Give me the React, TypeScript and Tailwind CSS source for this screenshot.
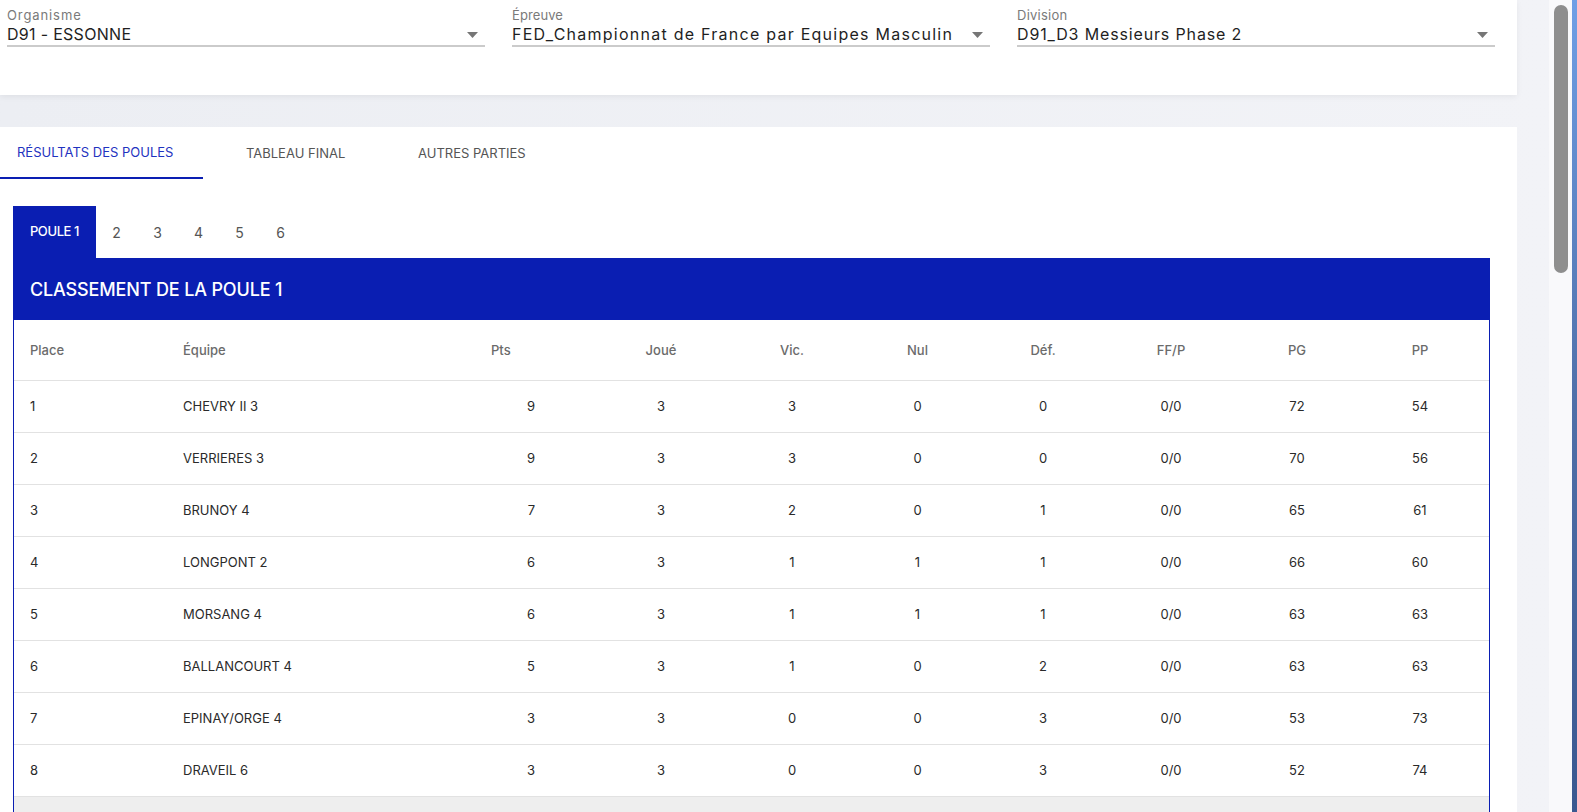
import React from "react";

const rows = [
  ["1", "CHEVRY II 3", "9", "3", "3", "0", "0", "0/0", "72", "54"],
  ["2", "VERRIERES 3", "9", "3", "3", "0", "0", "0/0", "70", "56"],
  ["3", "BRUNOY 4", "7", "3", "2", "0", "1", "0/0", "65", "61"],
  ["4", "LONGPONT 2", "6", "3", "1", "1", "1", "0/0", "66", "60"],
  ["5", "MORSANG 4", "6", "3", "1", "1", "1", "0/0", "63", "63"],
  ["6", "BALLANCOURT 4", "5", "3", "1", "0", "2", "0/0", "63", "63"],
  ["7", "EPINAY/ORGE 4", "3", "3", "0", "0", "3", "0/0", "53", "73"],
  ["8", "DRAVEIL 6", "3", "3", "0", "0", "3", "0/0", "52", "74"],
];

const grid =
  "grid grid-cols-[153px_308px_76px_43px_134px_128px_123px_128px_128px_124px_122px_1fr] items-center";

function Select({
  label,
  value,
  labelTrack,
  valueTrack,
}: {
  label: string;
  value: string;
  labelTrack: string;
  valueTrack: string;
}) {
  return (
    <div className="w-[478px] flex flex-col">
      <div className={`h-[16px] leading-[16px] text-[13px] text-[#7a7a7a] ${labelTrack}`}>{label}</div>
      <div className="h-[22px] flex items-center justify-between">
        <span className={`text-[16px] leading-[22px] text-[#1f1f1f] whitespace-nowrap ${valueTrack}`}>{value}</span>
        <svg width="11" height="6" viewBox="0 0 11 6" className="mr-[7px] mt-[2px]">
          <path d="M0 0 L11 0 L5.5 6 Z" fill="#767676" />
        </svg>
      </div>
      <div className="h-[2px] bg-[#cbcbcb]" />
    </div>
  );
}

export default function App() {
  return (
    <div
      className="w-[1577px] h-[812px] flex overflow-hidden bg-[#eef0f4]"
      style={{ fontFamily: "Inter, 'Open Sans', sans-serif" }}
    >
      <div className="w-[1549px] flex flex-col pr-[32px] bg-gradient-to-r from-[#eceef3] to-[#f2f3f7]">
        <div className="h-[95px] bg-white shadow-[0_2px_6px_rgba(0,0,0,0.06)] pt-[7px] pl-[7px] flex gap-[27px] shrink-0">
          <Select label="Organisme" value="D91 - ESSONNE" labelTrack="tracking-[0.9px]" valueTrack="tracking-[0.3px]" />
          <Select
            label="Épreuve"
            value="FED_Championnat de France par Equipes Masculin"
            labelTrack="tracking-[0.1px]"
            valueTrack="tracking-[1.25px]"
          />
          <Select
            label="Division"
            value="D91_D3 Messieurs Phase 2"
            labelTrack="tracking-[0.25px]"
            valueTrack="tracking-[0.85px]"
          />
        </div>

        <div className="mt-[32px] flex-1 bg-white flex flex-col">
          <div className="h-[52px] flex shrink-0 text-[13px]">
            <div className="w-[203px] h-full flex items-center pl-[17px] text-[#1f33c0] border-b-2 border-[#0a1eb2] pt-[2px]">
              RÉSULTATS DES POULES
            </div>
            <div className="w-[185px] h-full flex items-center pl-[43px] text-[#555] pt-[2px]">
              TABLEAU FINAL
            </div>
            <div className="w-[168px] h-full flex items-center pl-[30px] text-[#555] pt-[2px]">
              AUTRES PARTIES
            </div>
          </div>

          <div className="mt-[27px] ml-[13px] mr-[27px] flex flex-col flex-1">
            <div className="flex h-[52px] shrink-0">
              <div className="w-[83px] h-full bg-[#0a1eb2] text-white text-[13px] font-medium flex items-center justify-center tracking-[-0.4px]">
                POULE 1
              </div>
              {["2", "3", "4", "5", "6"].map((n) => (
                <div key={n} className="w-[41px] h-full flex items-center justify-center text-[14px] text-[#555]">
                  {n}
                </div>
              ))}
            </div>

            <div className="flex-1 border-x border-[#0a1eb2] flex flex-col">
              <div className="h-[62px] bg-[#0a1eb2] text-white text-[18px] font-medium flex items-center pl-[16px] shrink-0 tracking-[-0.15px]">
                CLASSEMENT DE LA POULE 1
              </div>
              <div className={`${grid} h-[61px] border-b border-[#e2e2e2] text-[13px] text-[#6b6b6b] font-medium shrink-0 pt-[1px]`}>
                <div className="pl-[16px]">Place</div>
                <div className="pl-[16px]">Équipe</div>
                <div className="pl-[16px]">Pts</div>
                <div />
                <div className="text-center">Joué</div>
                <div className="text-center">Vic.</div>
                <div className="text-center">Nul</div>
                <div className="text-center">Déf.</div>
                <div className="text-center">FF/P</div>
                <div className="text-center">PG</div>
                <div className="text-center">PP</div>
                <div />
              </div>
              {rows.map((r) => (
                <div key={r[0]} className={`${grid} h-[52px] border-b border-[#e2e2e2] text-[13px] text-[#2a2a2a] shrink-0`}>
                  <div className="pl-[16px]">{r[0]}</div>
                  <div className="pl-[16px]">{r[1]}</div>
                  <div className="text-right pr-[16px]">{r[2]}</div>
                  <div />
                  <div className="text-center">{r[3]}</div>
                  <div className="text-center">{r[4]}</div>
                  <div className="text-center">{r[5]}</div>
                  <div className="text-center">{r[6]}</div>
                  <div className="text-center">{r[7]}</div>
                  <div className="text-center">{r[8]}</div>
                  <div className="text-center">{r[9]}</div>
                  <div />
                </div>
              ))}
              <div className="flex-1 bg-[#eeeeee]" />
            </div>
          </div>
        </div>
      </div>

      <div className="w-[23px] h-full bg-[#f9f9fb] pt-[5px] pl-[5px]">
        <div className="w-[14px] h-[268px] rounded-full bg-[#8e8e8e]" />
      </div>
      <div className="w-[5px] h-full bg-gradient-to-b from-[#6f9fe6] via-[#4f6fa8] to-[#3a5890]" />
    </div>
  );
}
